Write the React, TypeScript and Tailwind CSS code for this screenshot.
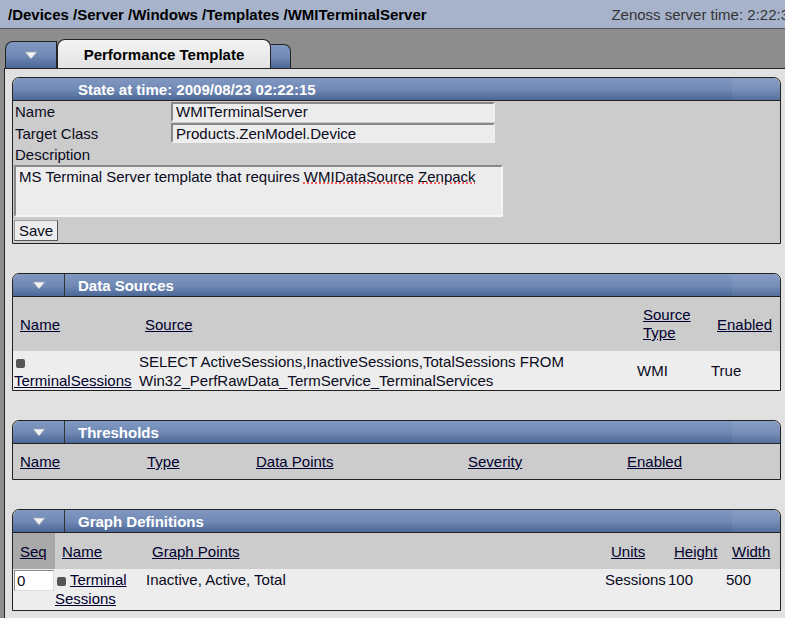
import React from "react";

const Triangle = () => (
  <svg width="14" height="9" viewBox="0 0 14 9">
    <polygon points="1,1 13,1 7,8" fill="#f4f4f4" stroke="#9aa3b5" strokeWidth="0.8" />
  </svg>
);

const headBg = "bg-linear-to-b from-[#8199c1] via-[#6f88b4] via-55% to-[#4a6796]";

function PanelHeader({ title, toggle = true }: { title: string; toggle?: boolean }) {
  return (
    <div className={`flex h-[23px] rounded-t-[7px] border-b border-[#222] ${headBg}`}>
      {toggle ? (
        <div className="flex w-[52px] items-center justify-center border-r border-[#333]">
          <Triangle />
        </div>
      ) : (
        <div className="w-[52px]" />
      )}
      <div className="flex items-center pl-[13px] text-[15px] font-bold text-white">{title}</div>
      <div className="ml-auto w-[48px] rounded-tr-[7px] bg-white/5" />
    </div>
  );
}

const Link = ({ children }: { children: React.ReactNode }) => (
  <a className="text-[#00002e] underline">{children}</a>
);

const Bullet = () => <span className="inline-block h-[9px] w-[9px] rounded-[2px] bg-[#555] align-[-1px]" />;

export default function App() {
  return (
    <div className="h-[618px] w-[785px] overflow-hidden bg-[#8d8d8d] text-[15px] leading-[19px] text-[#0a0a20]" style={{ fontFamily: '"Liberation Sans", Arial, sans-serif' }}>
      {/* top bar */}
      <div className="flex h-[29px] items-center overflow-hidden border-b border-[#555] bg-[#a6b3cb] pl-[8px]">
        <div className="text-[15px] font-bold text-black">/Devices /Server /Windows /Templates /WMITerminalServer</div>
        <div className="ml-auto mr-[-4px] whitespace-nowrap text-[15px] text-[#333]">Zenoss server time: 2:22:3</div>
      </div>

      {/* tabs */}
      <div className="flex h-[39px] items-end pl-[5px]">
        <div className={`flex h-[27px] w-[52px] items-center justify-center rounded-tl-[8px] border border-b-0 border-[#222] ${headBg}`}>
          <Triangle />
        </div>
        <div className="flex h-[29px] w-[214px] items-center justify-center rounded-t-[8px] border border-b-0 border-[#222] bg-linear-to-b from-[#f4f4f4] to-[#e2e2e2] text-[15px] font-bold text-black">
          Performance Template
        </div>
        <div className={`h-[24px] w-[20px] rounded-tr-[7px] border border-b-0 border-l-0 border-[#222] ${headBg}`} />
      </div>

      {/* content */}
      <div className="ml-[4px] h-full border-l border-t border-[#222] bg-[#e1e1e1] pl-[7px] pr-[4px] pt-[8px]">
        {/* State panel */}
        <div className="rounded-t-[7px] border border-[#222] bg-[#cccccc]">
          <PanelHeader title="State at time: 2009/08/23 02:22:15" toggle={false} />
          <div className="flex h-[21px] items-center">
            <div className="w-[158px] pl-[2px]">Name</div>
            <div className="flex h-[20px] w-[324px] items-center border-2 border-[#888] border-b-[#eee] border-r-[#eee] bg-[#ececec] pl-[3px]">WMITerminalServer</div>
          </div>
          <div className="flex h-[22px] items-center">
            <div className="w-[158px] pl-[2px]">Target Class</div>
            <div className="flex h-[20px] w-[324px] items-center border-2 border-[#888] border-b-[#eee] border-r-[#eee] bg-[#ececec] pl-[3px]">Products.ZenModel.Device</div>
          </div>
          <div className="flex h-[21px] items-center pl-[2px]">Description</div>
          <div className="pl-[1px]">
            <div className="h-[52px] w-[489px] border-2 border-[#888] border-b-[#f5f5f5] border-r-[#f5f5f5] bg-[#ececec] pl-[3px]">
              MS Terminal Server template that requires{" "}
              <span className="underline decoration-red-500 decoration-dotted">WMIDataSource</span>{" "}
              <span className="underline decoration-red-500 decoration-dotted">Zenpack</span>
            </div>
          </div>
          <div className="flex h-[26px] items-center pl-[1px]">
            <button className="h-[21px] border border-[#999] border-b-[#555] border-r-[#555] bg-[#ececec] px-[4px] text-[15px] leading-[17px]">Save</button>
          </div>
        </div>

        {/* Data Sources */}
        <div className="mt-[29px] rounded-t-[7px] border border-[#222] bg-[#cccccc]">
          <PanelHeader title="Data Sources" />
          <table className="w-full table-fixed border-collapse">
            <colgroup>
              <col className="w-[124px]" />
              <col className="w-[498px]" />
              <col className="w-[74px]" />
              <col />
            </colgroup>
            <thead>
              <tr className="h-[54px]">
                <th className="pl-[7px] text-left font-normal"><Link>Name</Link></th>
                <th className="pl-[8px] text-left font-normal"><Link>Source</Link></th>
                <th className="pl-[8px] text-left font-normal leading-[18px]"><Link>Source</Link><br /><Link>Type</Link></th>
                <th className="pl-[8px] text-left font-normal"><Link>Enabled</Link></th>
              </tr>
            </thead>
            <tbody>
              <tr className="h-[39px] bg-[#ededed]">
                <td className="pl-[1px]">
                  <div className="pl-[2px]"><Bullet /></div>
                  <Link>TerminalSessions</Link>
                </td>
                <td className="whitespace-nowrap pl-[2px]">
                  SELECT ActiveSessions,InactiveSessions,TotalSessions FROM
                  <br />
                  Win32_PerfRawData_TermService_TerminalServices
                </td>
                <td className="pl-[2px]">WMI</td>
                <td className="pl-[2px]">True</td>
              </tr>
            </tbody>
          </table>
        </div>

        {/* Thresholds */}
        <div className="mt-[29px] rounded-t-[7px] border border-[#222] bg-[#cccccc]">
          <PanelHeader title="Thresholds" />
          <table className="w-full table-fixed border-collapse">
            <colgroup>
              <col className="w-[127px]" />
              <col className="w-[109px]" />
              <col className="w-[212px]" />
              <col className="w-[159px]" />
              <col />
            </colgroup>
            <thead>
              <tr className="h-[35px]">
                <th className="pl-[7px] text-left font-normal"><Link>Name</Link></th>
                <th className="pl-[7px] text-left font-normal"><Link>Type</Link></th>
                <th className="pl-[7px] text-left font-normal"><Link>Data Points</Link></th>
                <th className="pl-[7px] text-left font-normal"><Link>Severity</Link></th>
                <th className="pl-[7px] text-left font-normal"><Link>Enabled</Link></th>
              </tr>
            </thead>
          </table>
        </div>

        {/* Graph Definitions */}
        <div className="mt-[29px] rounded-t-[7px] border border-[#222] bg-[#cccccc]">
          <PanelHeader title="Graph Definitions" />
          <table className="w-full table-fixed border-collapse">
            <colgroup>
              <col className="w-[42px]" />
              <col className="w-[90px]" />
              <col className="w-[459px]" />
              <col className="w-[63px]" />
              <col className="w-[58px]" />
              <col />
            </colgroup>
            <thead>
              <tr className="h-[36px]">
                <th className="bg-[#a9a9a9] pl-[7px] text-left font-normal"><Link>Seq</Link></th>
                <th className="pl-[7px] text-left font-normal"><Link>Name</Link></th>
                <th className="pl-[7px] text-left font-normal"><Link>Graph Points</Link></th>
                <th className="pl-[7px] text-left font-normal"><Link>Units</Link></th>
                <th className="pl-[7px] text-left font-normal"><Link>Height</Link></th>
                <th className="pl-[7px] text-left font-normal"><Link>Width</Link></th>
              </tr>
            </thead>
            <tbody>
              <tr className="h-[41px] bg-[#ededed] align-top">
                <td className="pl-[1px] pt-[1px]">
                  <div className="h-[21px] w-[40px] border border-[#888] border-b-[#ddd] border-r-[#ddd] bg-white pl-[2px] leading-[19px]">0</div>
                </td>
                <td className="pt-[1px]">
                  <div className="whitespace-nowrap pl-[2px]"><Bullet /> <Link>Terminal</Link></div>
                  <Link>Sessions</Link>
                </td>
                <td className="pl-[1px] pt-[1px]">Inactive, Active, Total</td>
                <td className="pl-[1px] pt-[1px]">Sessions</td>
                <td className="pl-[1px] pt-[1px]">100</td>
                <td className="pl-[1px] pt-[1px]">500</td>
              </tr>
            </tbody>
          </table>
        </div>
      </div>
    </div>
  );
}
